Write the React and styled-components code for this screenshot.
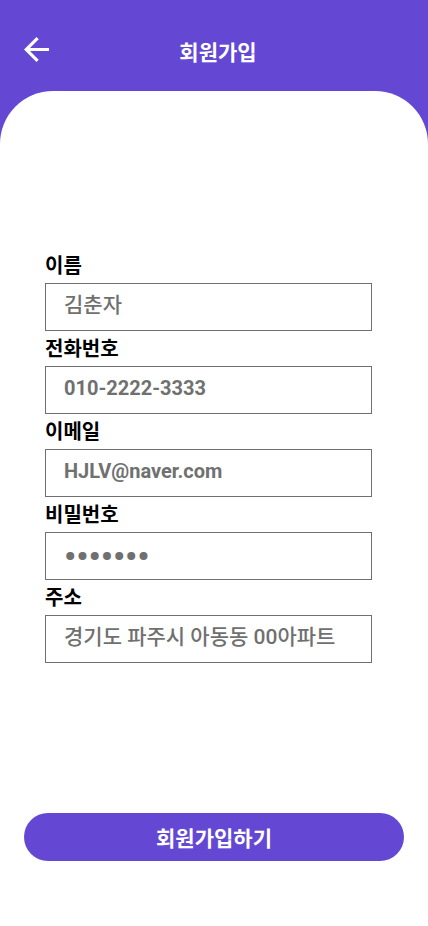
import React from "react";
import styled, { createGlobalStyle } from "styled-components";

const GlobalStyle = createGlobalStyle`
  *, *::before, *::after { box-sizing: border-box; }
  body { margin: 0; background: #6448d4; }
  body, input, button { font-family: Roboto, "Noto Sans CJK KR", sans-serif; }
`;

const Page = styled.div`
  min-height: 100vh;
  display: flex;
  flex-direction: column;
  background: #6448d4;
`;

const Header = styled.header`
  display: grid;
  grid-template-columns: 32px 1fr 24px;
  align-items: start;
  padding: 32px 24px 19px;
`;

const BackButton = styled.button`
  display: flex;
  padding: 5px 0 0;
  border: 0;
  background: none;
  color: #fff;
  cursor: pointer;
`;

const Title = styled.h1`
  margin: 0;
  padding-top: 2px;
  color: #fff;
  font-size: 21px;
  line-height: 38px;
  font-weight: 700;
  text-align: center;
`;

const Form = styled.form`
  flex: 1;
  display: flex;
  flex-direction: column;
  padding: 157px 24px 65px;
  border-radius: 53px 53px 0 0;
  background: #fff;
`;

const Fields = styled.div`
  display: flex;
  flex-direction: column;
  padding: 0 32px 0 21px;
`;

const Label = styled.label`
  height: 35px;
  padding-top: 3px;
  color: #000;
  font-size: 20px;
  line-height: 30px;
  font-weight: 700;
`;

const variants = {
  hangul: "padding-bottom: 8px; font-size: 21px; font-weight: 500;",
  latin: "padding-bottom: 4px; font-size: 20px; font-weight: 700;",
  masked: "font-size: 34px; font-weight: 700;",
};

const Input = styled.input`
  width: 100%;
  height: 48px;
  padding: 0 18px;
  border: 1px solid #707070;
  border-radius: 0;
  outline-color: #6448d4;
  background: #fff;
  color: #707070;
  ${({ $variant }) => variants[$variant]}
`;

const SubmitButton = styled.button`
  height: 48px;
  margin-top: auto;
  padding: 0;
  border: 0;
  border-radius: 24px;
  background: #6448d4;
  color: #fff;
  font-size: 21px;
  font-weight: 700;
  cursor: pointer;
`;

const fields = [
  { id: "name", label: "이름", type: "text", variant: "hangul", value: "김춘자" },
  { id: "phone", label: "전화번호", type: "tel", variant: "latin", value: "010-2222-3333" },
  { id: "email", label: "이메일", type: "email", variant: "latin", value: "HJLV@naver.com" },
  { id: "password", label: "비밀번호", type: "password", variant: "masked", value: "1234567" },
  { id: "address", label: "주소", type: "text", variant: "hangul", value: "경기도 파주시 아동동 00아파트" },
];

function BackIcon() {
  return (
    <svg width="25" height="25" viewBox="4 4 16 16" fill="currentColor" aria-hidden="true">
      <path d="M20 11H7.83l5.59-5.59L12 4l-8 8 8 8 1.41-1.41L7.83 13H20v-2z" />
    </svg>
  );
}

export default function App() {
  return (
    <Page>
      <GlobalStyle />
      <Header>
        <BackButton type="button" aria-label="뒤로">
          <BackIcon />
        </BackButton>
        <Title>회원가입</Title>
      </Header>
      <Form onSubmit={(event) => event.preventDefault()}>
        <Fields>
          {fields.map(({ id, label, type, variant, value }) => (
            <React.Fragment key={id}>
              <Label htmlFor={id}>{label}</Label>
              <Input id={id} type={type} $variant={variant} defaultValue={value} />
            </React.Fragment>
          ))}
        </Fields>
        <SubmitButton type="submit">회원가입하기</SubmitButton>
      </Form>
    </Page>
  );
}
